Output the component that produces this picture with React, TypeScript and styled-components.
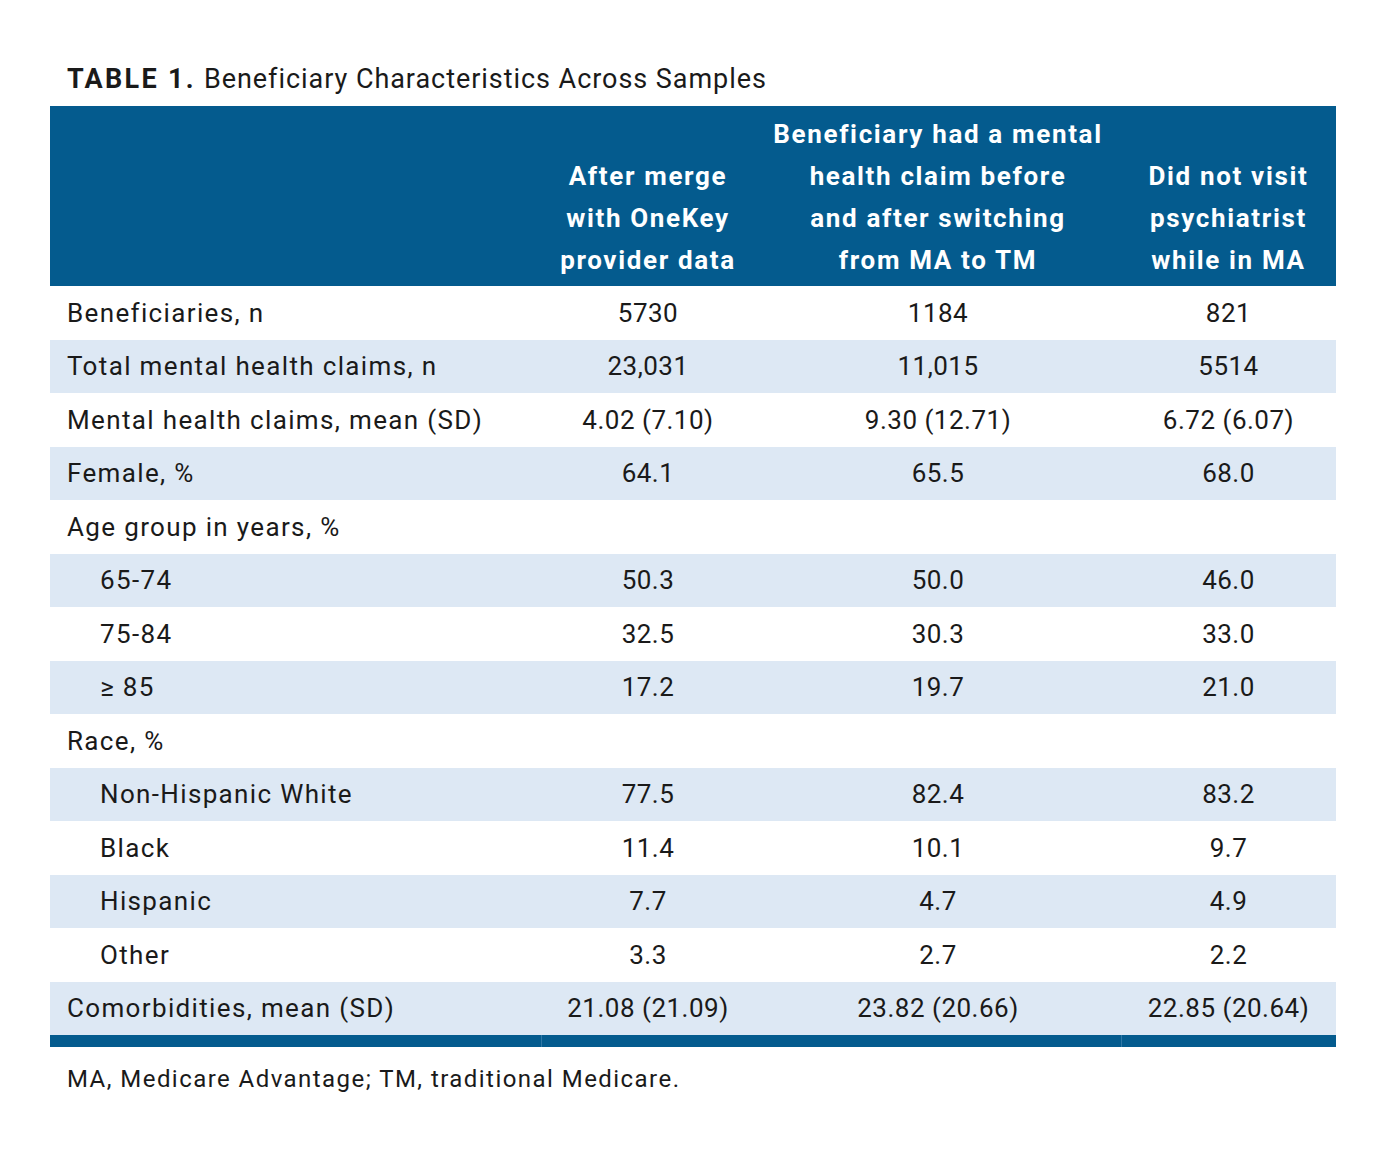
import React from "react";
import styled, { createGlobalStyle } from "styled-components";

const Global = createGlobalStyle`
  html, body { margin: 0; padding: 0; background: #ffffff; }
  body { font-family: Roboto, "Liberation Sans", sans-serif; color: #1a1a1a; }
`;

const Page = styled.div`
  padding: 62px 50px 0 50px;
  width: 1286px;
`;

const Title = styled.div`
  font-size: 27px;
  line-height: 34px;
  padding-left: 17px;
  height: 44px;
  color: #1a1a1a;
  letter-spacing: 0.95px;
`;

const TitleLabel = styled.span`
  font-weight: 700;
  letter-spacing: 2.3px;
  margin-right: 8px;
`;

const COLS = "491px 214px 366px 215px";

const Grid = styled.div`
  display: grid;
  grid-template-columns: ${COLS};
`;

const HeadCell = styled.div`
  background: #045b8e;
  color: #ffffff;
  font-weight: 700;
  font-size: 26px;
  line-height: 42px;
  height: 180px;
  display: flex;
  flex-direction: column;
  justify-content: flex-end;
  align-items: center;
  text-align: center;
  padding-bottom: 5px;
  box-sizing: border-box;
  letter-spacing: 1.65px;
  white-space: nowrap;
`;

const Cell = styled.div<{ $shade: boolean; $first?: boolean; $indent?: boolean }>`
  background: ${(p) => (p.$shade ? "#dde8f4" : "#ffffff")};
  height: 53.5px;
  display: flex;
  align-items: center;
  justify-content: ${(p) => (p.$first ? "flex-start" : "center")};
  padding-left: ${(p) => (p.$first ? (p.$indent ? "50px" : "17px") : "0")};
  font-size: 26px;
  letter-spacing: ${(p) => (p.$first ? "1.35px" : "0.5px")};
  box-sizing: border-box;
  color: #1a1a1a;
  white-space: nowrap;
`;

const Bar = styled.div`
  display: grid;
  grid-template-columns: 491px 580px 215px;
  height: 12px;
`;

const BarSeg = styled.div<{ $line?: boolean }>`
  background: #045b8e;
  border-left: ${(p) => (p.$line ? "1px solid #2f77a6" : "none")};
`;

const Note = styled.div`
  font-size: 24px;
  padding: 18px 0 0 17px;
  letter-spacing: 1.45px;
  color: #1a1a1a;
`;

type Row = { label: string; indent?: boolean; vals: string[] };

const rows: Row[] = [
  { label: "Beneficiaries, n", vals: ["5730", "1184", "821"] },
  { label: "Total mental health claims, n", vals: ["23,031", "11,015", "5514"] },
  { label: "Mental health claims, mean (SD)", vals: ["4.02 (7.10)", "9.30 (12.71)", "6.72 (6.07)"] },
  { label: "Female, %", vals: ["64.1", "65.5", "68.0"] },
  { label: "Age group in years, %", vals: ["", "", ""] },
  { label: "65-74", indent: true, vals: ["50.3", "50.0", "46.0"] },
  { label: "75-84", indent: true, vals: ["32.5", "30.3", "33.0"] },
  { label: "\u2265 85", indent: true, vals: ["17.2", "19.7", "21.0"] },
  { label: "Race, %", vals: ["", "", ""] },
  { label: "Non-Hispanic White", indent: true, vals: ["77.5", "82.4", "83.2"] },
  { label: "Black", indent: true, vals: ["11.4", "10.1", "9.7"] },
  { label: "Hispanic", indent: true, vals: ["7.7", "4.7", "4.9"] },
  { label: "Other", indent: true, vals: ["3.3", "2.7", "2.2"] },
  { label: "Comorbidities, mean (SD)", vals: ["21.08 (21.09)", "23.82 (20.66)", "22.85 (20.64)"] },
];

const heads: string[][] = [
  [],
  ["After merge", "with OneKey", "provider data"],
  ["Beneficiary had a mental", "health claim before", "and after switching", "from MA to TM"],
  ["Did not visit", "psychiatrist", "while in MA"],
];

export default function App() {
  return (
    <>
      <Global />
      <Page>
        <Title>
          <TitleLabel>TABLE 1.</TitleLabel>Beneficiary Characteristics Across Samples
        </Title>
        <Grid>
          {heads.map((h, i) => (
            <HeadCell key={i}>
              {h.map((l, j) => (
                <div key={j}>{l}</div>
              ))}
            </HeadCell>
          ))}
          {rows.map((r, i) => (
            <React.Fragment key={i}>
              <Cell $shade={i % 2 === 1} $first $indent={r.indent}>
                {r.label}
              </Cell>
              {r.vals.map((v, j) => (
                <Cell key={j} $shade={i % 2 === 1}>
                  {v}
                </Cell>
              ))}
            </React.Fragment>
          ))}
        </Grid>
        <Bar>
          <BarSeg />
          <BarSeg $line />
          <BarSeg $line />
        </Bar>
        <Note>MA, Medicare Advantage; TM, traditional Medicare.</Note>
      </Page>
    </>
  );
}
